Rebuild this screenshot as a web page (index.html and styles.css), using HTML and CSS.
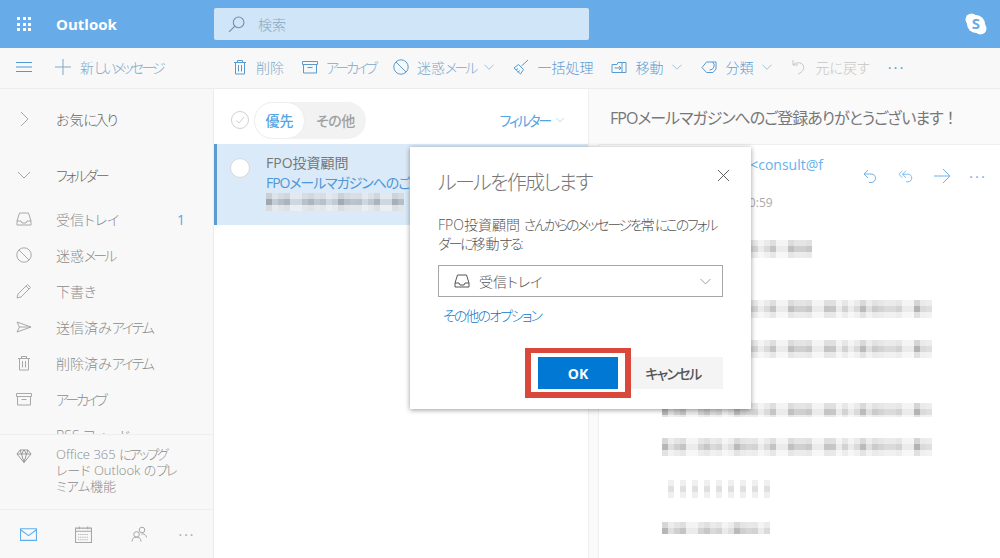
FILE: index.html
```html
<!DOCTYPE html>
<html lang="ja">

<head>
  <meta charset="utf-8" />
  <title>Outlook</title>
  <link rel="stylesheet" href="styles.css">
</head>

<body>
  <svg class="sprite" xmlns="http://www.w3.org/2000/svg">
    <symbol id="i-trash" viewBox="0 0 16 16"><path d="M2 3.5h12M5.5 3.5V1.5h5v2M3.5 3.5v11.5h9V3.500M6.500 6v6.500M9.500 6v6.500" /></symbol>
    <symbol id="i-archive" viewBox="0 0 16 16"><path d="M.5 2.500h15v3h-15zM1.500 5.500v8.500h13V5.500M5.500 8.500h5" /></symbol>
    <symbol id="i-block" viewBox="0 0 16 16"><circle cx="8" cy="8" r="7.200" /><path d="M3 3l10 10" /></symbol>
    <symbol id="i-inbox" viewBox="0 0 16 16"><path d="M3.500 2h9l2.500 8v4H1v-4zM1 10h4l1 2h4l1-2h4" /></symbol>
    <symbol id="i-pencil" viewBox="0 0 16 16"><path d="M11.500 1.500l3 3L5 14l-4 1 1-4zM10 3l3 3" /></symbol>
    <symbol id="i-send" viewBox="0 0 16 16"><path d="M1 3l14 5-14 5 2.500-5zM3.500 8H15" /></symbol>
    <symbol id="i-chevron" viewBox="0 0 16 16"><path d="M2 5l6 6 6-6" /></symbol>
  </svg>

  <div class="app">
    <header class="topbar">
      <div class="waffle">
        <i></i><i></i><i></i><i></i><i></i><i></i><i></i><i></i><i></i>
      </div>
      <span class="brand">Outlook</span>
      <div class="search">
        <svg class="icon search-icon" viewBox="0 0 16 16"><circle cx="10" cy="6" r="5" /><path d="M6.500 9.500L1 15" /></svg>
        <span>検索</span>
      </div>
      <svg class="skype" viewBox="0 0 22 22">
        <circle cx="6.500" cy="6.500" r="6" />
        <circle cx="15.500" cy="15.500" r="6" />
        <circle cx="11" cy="11" r="9" />
        <text x="11" y="16" text-anchor="middle">S</text>
      </svg>
    </header>

    <div class="toolbar">
      <div class="toolbar-left">
        <svg class="icon hamburger" viewBox="0 0 16 10"><path d="M0 .5h16M0 5h16M0 9.500h16" /></svg>
        <svg class="icon plus" viewBox="0 0 16 16"><path d="M8 0v16M0 8h16" /></svg>
        <span>新<span class="kana-tight">しいメッセージ</span></span>
      </div>
      <div class="toolbar-actions">
        <button class="tool"><svg class="icon"><use href="#i-trash" /></svg>削除</button>
        <button class="tool"><svg class="icon"><use href="#i-archive" /></svg><span class="kana-tight">アーカイブ</span></button>
        <button class="tool"><svg class="icon"><use href="#i-block" /></svg><span>迷惑<span class="kana-tight">メール</span></span><svg class="icon caret"><use href="#i-chevron" /></svg></button>
        <button class="tool tool-strong">
          <svg class="icon" viewBox="0 0 16 16"><path d="M15 1L8.500 7M5.500 5.500l5 5-3 4.500L1 9zM3 11l2-1.500M5 13.500l1.500-2" /></svg>一括処理
        </button>
        <button class="tool tool-strong">
          <svg class="icon" viewBox="0 0 16 16"><path d="M1 5.500h5l1-2h8v10H1zM3.500 9H10M8 7l2 2-2 2M11 3.500v10" /></svg>移動<svg class="icon caret"><use href="#i-chevron" /></svg>
        </button>
        <button class="tool tool-strong">
          <svg class="icon" viewBox="0 0 16 16"><path d="M5.500 3H15v7l-3 3.500H5.500L1 8.500zM11.500 3a4.500 4.500 0 0 1-3 8" /></svg>分類<svg class="icon caret"><use href="#i-chevron" /></svg>
        </button>
        <button class="tool tool-off">
          <svg class="icon" viewBox="0 0 16 16"><path d="M2 1v5h5M2 6c3-3 8-3 10 0s0 7-5 9" /></svg>元に戻す
        </button>
        <span class="tool-more">···</span>
      </div>
    </div>

    <div class="panes">
      <aside class="sidebar">
        <nav class="folders">
          <div class="row row-head row-fav">
            <svg class="icon" viewBox="0 0 16 16"><path d="M5 1l7 7-7 7" /></svg>
            <span>お気<span class="kana">に入り</span></span>
          </div>
          <div class="row row-head row-folder">
            <svg class="icon"><use href="#i-chevron" /></svg>
            <span class="kana">フォルダー</span>
          </div>
          <div class="row row-inbox"><svg class="icon"><use href="#i-inbox" /></svg><span>受信トレイ</span><b class="badge">1</b></div>
          <div class="row"><svg class="icon"><use href="#i-block" /></svg><span>迷惑<span class="kana-tight">メール</span></span></div>
          <div class="row"><svg class="icon"><use href="#i-pencil" /></svg><span>下書き</span></div>
          <div class="row"><svg class="icon"><use href="#i-send" /></svg><span>送信済み<span class="kana">アイテム</span></span></div>
          <div class="row"><svg class="icon"><use href="#i-trash" /></svg><span>削除済み<span class="kana">アイテム</span></span></div>
          <div class="row"><svg class="icon"><use href="#i-archive" /></svg><span class="kana-tight">アーカイブ</span></div>
          <div class="row"><span class="row-clipped">RSS フィード</span></div>
        </nav>
        <div class="promo">
          <svg class="icon" viewBox="0 0 16 16"><path d="M4 2h8l3 4-7 8.500L1 6zM1 6h14M5.500 6L8 14.500 10.500 6M4 2l1.500 4L8 2l2.500 4L12 2" /></svg>
          <p>Office 365 <span class="kana">にアップグ</span><br>レード Outlook の<span class="kana">プレ</span><br>ミアム機能</p>
        </div>
        <div class="appnav">
          <svg class="icon nav-mail" viewBox="0 0 16 12"><path d="M.5.500h15v11H.5zM.5 1.500L8 7l7.500-5.500" /></svg>
          <svg class="icon nav-cal" viewBox="0 0 16 16"><path d="M.5 2h15v13.500H.5zM.5 5h15M4 .5V3M12 .5V3" /><path class="dots" d="M3 8h10M3 10.500h10M3 13h10" /></svg>
          <svg class="icon nav-people" viewBox="0 0 16 16"><circle cx="5.500" cy="8.500" r="2.800" /><circle cx="11" cy="4" r="2.800" /><path d="M1 15.500c0-3 2-4.500 4.500-4.500s4.500 1.500 4.500 4.500M10.500 8c2.500-.5 5 1 5 3.500" /></svg>
          <span class="nav-more">···</span>
        </div>
      </aside>

      <section class="list">
        <div class="list-head">
          <span class="check-all">
            <svg viewBox="0 0 18 18"><circle cx="9" cy="9" r="8.500" /><path d="M5 9.500l3 2.500 5-6" /></svg>
          </span>
          <div class="pill">
            <span class="pill-on">優先</span>
            <span class="pill-off">その他</span>
          </div>
          <span class="filter"><span class="kana">フィルター</span><svg class="icon"><use href="#i-chevron" /></svg></span>
        </div>
        <article class="mail">
          <span class="mail-check"></span>
          <div class="mail-text">
            <div class="mail-from">FPO投資顧問</div>
            <div class="mail-subject">FPOメールマガジンへのご登録ありがとうございます！</div>
            <div class="blur blur-preview"></div>
          </div>
        </article>
      </section>

      <section class="reading">
        <h1 class="subject">FPOメールマガジンへのご登録ありがとうございます<span class="subject-mark">！</span></h1>
        <div class="message">
          <div class="message-head">
            <div class="sender">
              <div class="sender-name">FPO投資顧問 <span>&lt;consult@f</span></div>
              <div class="sender-time">10:59</div>
            </div>
            <div class="message-actions">
              <span><svg class="icon" viewBox="0 0 16 16"><path d="M6 2L2 6l4 4M2 6h7c6 0 6 8.500 0 8.500H7" /></svg></span>
              <span><svg class="icon" viewBox="0 0 18 16"><path d="M5 2L1 6l4 4M9 2L5 6l4 4M5 6h6c6 0 6 8.500 0 8.500H9" /></svg></span>
              <span><svg class="icon action-forward" viewBox="0 0 18 16"><path d="M1 8h16M10 1l7 7-7 7" /></svg></span>
              <span class="actions-more">···</span>
            </div>
          </div>
          <div class="message-body">
            <div class="blur"></div>
            <div class="blur"></div>
            <div class="blur"></div>
            <div class="blur"></div>
            <div class="blur"></div>
            <div class="blur blur-sparse"></div>
            <div class="blur"></div>
          </div>
        </div>
      </section>
    </div>

    <div class="dialog">
      <div class="dialog-head">
        <h2>ルールを作成します</h2>
        <svg class="icon dialog-close" viewBox="0 0 14 14"><path d="M1 1l12 12M13 1L1 13" /></svg>
      </div>
      <p class="dialog-text">FPO投資顧問 <span class="kana">さんからのメッセージを</span>常<span class="kana">にこのフォル</span><br><span class="kana">ダーに</span>移動<span class="kana">する</span>:</p>
      <div class="select">
        <svg class="icon"><use href="#i-inbox" /></svg>
        <span>受信トレイ</span>
        <svg class="icon caret"><use href="#i-chevron" /></svg>
      </div>
      <a class="more-options" href="#">その他のオプション</a>
      <div class="dialog-foot">
        <button class="btn btn-ok">OK</button>
        <button class="btn btn-cancel">キャンセル</button>
      </div>
    </div>
  </div>
</body>

</html>
```

FILE: styles.css
```css
* {
  box-sizing: border-box;
}

body {
  margin: 0;
  height: 558px;
  overflow: hidden;
  font-family: 'Open Sans', 'Noto Sans CJK JP', sans-serif;
  font-size: 14px;
  font-weight: 300;
  font-feature-settings: "palt";
  color: #777;
  background: #fff;
}

/* the original UI font sets kana much narrower than kanji */
.kana {
  letter-spacing: -2.200px;
}

.kana-tight {
  letter-spacing: -2.900px;
}

.sprite {
  display: none;
}

.icon {
  width: 16px;
  height: 16px;
  flex: none;
  fill: none;
  stroke: currentColor;
  stroke-width: 1;
}

button {
  font: inherit;
  font-feature-settings: inherit;
  border: 0;
  padding: 0;
  background: none;
}

.app {
  position: relative;
  display: flex;
  flex-direction: column;
  height: 558px;
}

/* top bar */
.topbar {
  display: flex;
  align-items: center;
  height: 48px;
  background: #67ace8;
  color: #fff;
}

.waffle {
  display: grid;
  grid-template-columns: repeat(3, 3px);
  gap: 2.500px;
  margin-left: 17px;
}

.waffle i {
  height: 3px;
  background: #fff;
}

.brand {
  margin-left: 25px;
  width: 158px;
  font-size: 15px;
  font-weight: 700;
}

.search {
  display: flex;
  align-items: center;
  width: 375px;
  height: 32px;
  padding-left: 14px;
  border-radius: 2px;
  background: #d0e5f8;
  color: #8aa8c2;
}

.search-icon {
  width: 17px;
  height: 17px;
  margin-right: 13px;
  color: #6d8da8;
}

.skype {
  width: 22px;
  height: 22px;
  margin-left: auto;
  margin-right: 13px;
  fill: #fff;
}

.skype text {
  fill: #67ace8;
  font-family: 'Open Sans', sans-serif;
  font-size: 15px;
  font-weight: 700;
}

/* toolbar */
.toolbar {
  display: flex;
  align-items: center;
  height: 41px;
  padding-bottom: 2px;
  background: #f8f8f8;
  border-bottom: 1px solid #ececec;
  color: #7fa8c9;
}

.toolbar-left {
  display: flex;
  align-items: center;
  width: 214px;
  padding-left: 16px;
}

.hamburger {
  height: 10px;
  margin-right: 23px;
  color: #4f9ad8;
}

.plus {
  margin-right: 9px;
  color: #7fa8c9;
}

.toolbar-actions {
  display: flex;
  align-items: center;
  gap: 18px;
  padding-left: 18px;
}

.tool {
  display: flex;
  align-items: center;
  gap: 8px;
  color: #7fa8c9;
  white-space: nowrap;
}

.tool .icon {
  color: #5a9bcf;
}

.tool .caret {
  width: 12px;
  height: 12px;
  color: #7fb0d6;
}

.tool-strong {
  color: #5d9fd4;
}

.tool-off,
.tool-off .icon {
  color: #c6c6c6;
}

.tool-more {
  font-size: 15px;
  font-weight: 400;
  letter-spacing: 2px;
  color: #5a9bcf;
}

/* panes */
.panes {
  display: flex;
  flex: 1;
  min-height: 0;
}

.sidebar {
  display: flex;
  flex-direction: column;
  width: 214px;
  flex: none;
  background: #f8f8f8;
  border-right: 1px solid #ececec;
}

.folders {
  flex: 1;
  min-height: 0;
  overflow: hidden;
  padding-top: 12px;
}

.row {
  display: flex;
  align-items: center;
  gap: 24px;
  height: 36px;
  padding-left: 16px;
  color: #8c8c8c;
  white-space: nowrap;
}

.row .icon {
  color: #a8a8a8;
  width: 16px;
  height: 16px;
}

.row-head {
  color: #666;
}

.row-folder {
  margin-top: 20px;
}

.row-inbox {
  margin-top: 8px;
}

.row-clipped {
  margin-left: 40px;
}

.badge {
  margin-left: auto;
  margin-right: 28px;
  font-weight: 400;
  color: #5ba3dc;
}

.promo {
  display: flex;
  gap: 24px;
  height: 75px;
  padding: 11px 0 0 16px;
  border-top: 1px solid #efefef;
  background: #f8f8f8;
  color: #8c8c8c;
}

.promo .icon {
  margin-top: 2px;
  color: #999;
}

.promo p {
  margin: 0;
  font-size: 13px;
  line-height: 16px;
  white-space: nowrap;
}

.appnav {
  display: grid;
  grid-template-columns: 56px 55px 56px 40px;
  align-items: center;
  justify-items: center;
  height: 49px;
  border-top: 1px solid #efefef;
}

.nav-mail {
  width: 17px;
  height: 13px;
  color: #5eaeee;
}

.nav-cal {
  width: 17px;
  height: 17px;
  color: #a6a6a6;
}

.nav-cal .dots {
  stroke-dasharray: 1 1;
}

.nav-people {
  width: 16px;
  height: 16px;
  color: #a6a6a6;
}

.nav-more {
  font-size: 14px;
  font-weight: 400;
  letter-spacing: 2px;
  color: #aaa;
}

/* message list */
.list {
  width: 374px;
  flex: none;
  overflow: hidden;
  background: #fff;
}

.list-head {
  display: flex;
  align-items: center;
  height: 55px;
  padding: 7px 23px 0 17px;
}

.check-all svg {
  display: block;
  width: 18px;
  height: 18px;
  fill: none;
  stroke: #d0d0d0;
}

.pill {
  display: flex;
  align-items: center;
  width: 112px;
  height: 37px;
  margin-left: 5px;
  border-radius: 19px;
  background: #f2f2f2;
  font-weight: 500;
}

.pill-on {
  width: 51px;
  height: 37px;
  line-height: 35px;
  text-align: center;
  border-radius: 19px;
  background: #fff;
  border: 1px solid #eee;
  color: #54a4e4;
}

.pill-off {
  flex: 1;
  text-align: center;
  letter-spacing: -.5px;
  color: #a0a0a0;
}

.filter {
  display: flex;
  align-items: center;
  gap: 5px;
  margin-left: auto;
  font-weight: 400;
  color: #54a4e4;
}

.filter .icon {
  width: 10px;
  height: 10px;
  color: #8cbfe8;
}

.mail {
  display: flex;
  gap: 16px;
  height: 81px;
  padding: 9px 0 0 13px;
  background: #daeaf8;
  border-left: 3px solid #5b9bd0;
}

.mail-check {
  width: 20px;
  height: 20px;
  flex: none;
  margin-top: 5px;
  border-radius: 50%;
  background: #fff;
  border: 1px solid #d8d8d8;
}

.mail-text {
  min-width: 0;
  white-space: nowrap;
}

.mail-from {
  line-height: 20px;
  font-weight: 400;
  color: #777;
}

.mail-subject {
  line-height: 20px;
  font-weight: 400;
  letter-spacing: -1.100px;
  color: #4f97d6;
}

/* pixelated stand-in for the redacted text */
.blur {
  height: 18px;
  background-color: #ebebeb;
  background-image:
    linear-gradient(rgba(255, 255, 255, .45) 0 6px, transparent 6px 12px, rgba(255, 255, 255, .6) 12px),
    repeating-linear-gradient(90deg, rgba(0, 0, 0, .1) 0 6px, transparent 6px 18px),
    repeating-linear-gradient(90deg, transparent 0 12px, rgba(0, 0, 0, .07) 12px 24px, transparent 24px 30px),
    repeating-linear-gradient(90deg, rgba(0, 0, 0, .09) 0 6px, transparent 6px 42px),
    repeating-linear-gradient(90deg, rgba(0, 0, 0, .05) 0 18px, transparent 18px 66px);
}

.blur-preview {
  width: 138px;
  background-color: #ccd7e1;
}

.blur-sparse {
  background-color: transparent;
  background-image:
    linear-gradient(rgba(255, 255, 255, .5) 0 6px, transparent 6px 12px, rgba(255, 255, 255, .5) 12px),
    repeating-linear-gradient(90deg, transparent 0 6px, rgba(0, 0, 0, .12) 6px 12px);
}

/* reading pane */
.reading {
  flex: 1;
  min-width: 0;
  display: flex;
  flex-direction: column;
  background: #fafafa;
  border-left: 1px solid #efefef;
}

.subject {
  margin: 0;
  height: 55px;
  padding: 16px 0 0 21px;
  font-size: 16px;
  font-weight: 400;
  line-height: 26px;
  letter-spacing: -1px;
  color: #777;
  white-space: nowrap;
}

.subject-mark {
  letter-spacing: 0;
  font-feature-settings: normal;
}

.message {
  flex: 1;
  margin-left: 9px;
  background: #fff;
  border-top: 1px solid #eee;
  border-left: 1px solid #eee;
  overflow: hidden;
}

.message-head {
  display: flex;
  justify-content: space-between;
  height: 84px;
}

.sender {
  padding: 12px 0 0 63px;
  white-space: nowrap;
}

.sender-name {
  line-height: 16px;
  font-weight: 400;
  color: #777;
}

.sender-name span {
  margin-left: 2px;
  color: #66b1ec;
}

.sender-time {
  margin-top: 22px;
  padding-left: 80px;
  font-size: 12px;
  line-height: 16px;
  font-weight: 400;
  color: #aaa;
}

.message-actions {
  display: flex;
  height: 22px;
  margin: 20px 4px 0 0;
  color: #6cb3ee;
}

.message-actions span {
  display: flex;
  align-items: center;
  justify-content: center;
  width: 36px;
}

.action-forward {
  width: 18px;
}

.actions-more {
  font-size: 15px;
  font-weight: 400;
  letter-spacing: 2px;
}

.message-body {
  padding-left: 63px;
}

.message-body .blur {
  width: 270px;
  margin-top: 22px;
}

.message-body .blur:nth-child(1) {
  width: 150px;
  margin-top: 11px;
}

.message-body .blur:nth-child(2) {
  margin-top: 42px;
}

.message-body .blur:nth-child(4) {
  margin-top: 45px;
  height: 14px;
}

.message-body .blur:nth-child(5) {
  margin-top: 21px;
}

.message-body .blur:nth-child(6) {
  width: 114px;
  margin-top: 24px;
}

.message-body .blur:nth-child(7) {
  width: 108px;
  height: 12px;
  margin-top: 24px;
}

/* dialog */
.dialog {
  position: absolute;
  left: 410px;
  top: 147px;
  width: 341px;
  height: 262px;
  padding: 22px 28px 0;
  background: #fff;
  box-shadow: 0 1px 5px rgba(0, 0, 0, .4);
}

.dialog-head {
  display: flex;
  justify-content: space-between;
}

.dialog-head h2 {
  margin: 0;
  font-size: 20px;
  font-weight: 300;
  line-height: 28px;
  letter-spacing: -1.700px;
  color: #777;
}

.dialog-close {
  width: 13px;
  height: 13px;
  margin: 0 -7px 0 0;
  color: #555;
}

.dialog-text {
  margin: 18px 0 0;
  line-height: 19px;
  color: #555;
  white-space: nowrap;
}

.select {
  display: flex;
  align-items: center;
  gap: 9px;
  height: 32px;
  margin-top: 12px;
  padding: 0 10px 0 15px;
  border: 1px solid #a6a6a6;
  color: #555;
}

.select .caret {
  width: 13px;
  height: 13px;
  margin-left: auto;
  color: #888;
}

.more-options {
  display: block;
  margin: 10px 0 0 5px;
  line-height: 18px;
  letter-spacing: -1.900px;
  color: #0f78cc;
  text-decoration: none;
}

.dialog-foot {
  display: flex;
  justify-content: flex-end;
  gap: 8px;
  margin-top: 32px;
}

.btn {
  height: 32px;
  font-size: 14px;
  font-weight: 700;
}

.btn-ok {
  position: relative;
  width: 80px;
  background: #0078d4;
  color: #fff;
}

/* the red marker that the screenshot's author drew round OK */
.btn-ok::after {
  content: "";
  position: absolute;
  inset: -9px -13px;
  border: solid #d9483b;
  border-width: 5px 6px 6px;
}

.btn-cancel {
  width: 97px;
  padding-right: 3px;
  background: #f4f4f4;
  font-weight: 500;
  letter-spacing: -1.600px;
  color: #555;
}
```
